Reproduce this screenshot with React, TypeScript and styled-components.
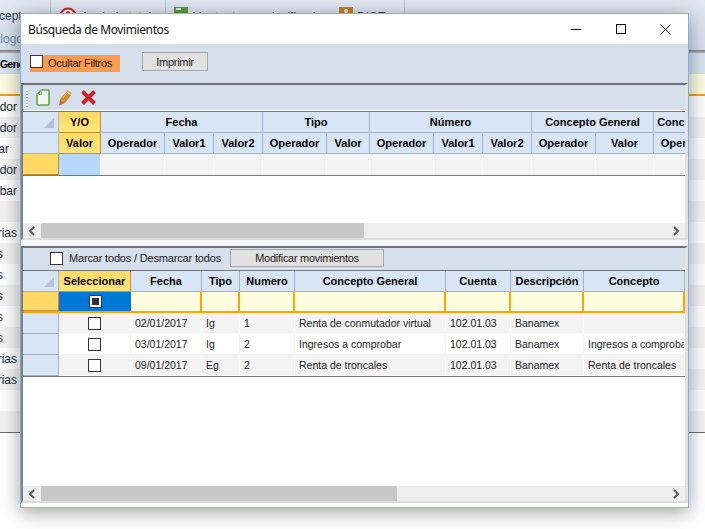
import React from 'react';
import styled, { createGlobalStyle } from 'styled-components';

const GlobalStyle = createGlobalStyle`
  html, body {
    margin: 0;
    padding: 0;
    width: 705px;
    height: 529px;
    overflow: hidden;
    background: #fff;
    font-family: 'Liberation Sans', Arial, sans-serif;
    font-size: 11px;
    color: #222;
  }
  * { box-sizing: border-box; }
`;

const Page = styled.div`
  position: relative;
  width: 705px;
  height: 529px;
  overflow: hidden;
`;

/* ---- application behind the dialog ---- */

const Ribbon = styled.div`
  display: flex;
  height: 50px;
  background: linear-gradient(#e0e7f1, #d3dfed);
`;

const RibbonGroup = styled.div<{ $w: number }>`
  flex: 0 0 ${(p) => p.$w}px;
  display: flex;
  flex-direction: column;
  gap: 9px;
  padding: 9px 0 0 8px;
  border-right: 1px solid #b4bfcd;
  overflow: hidden;
  font-size: 12px;
  color: #33445c;
  white-space: nowrap;
`;

const RibbonEdgeText = styled.span<{ $shift: number; $light?: boolean }>`
  margin-left: ${(p) => p.$shift}px;
  color: ${(p) => (p.$light ? '#6f8aa8' : '#33445c')};
`;

const RibbonItem = styled.div`
  display: flex;
  align-items: flex-start;
  gap: 4px;
  margin-top: -2px;
`;

const RibbonLabel = styled.span<{ $w?: number }>`
  margin-top: 3px;
  ${(p) => (p.$w ? `flex: 0 0 ${p.$w}px;` : '')}
`;

const BackHeaderRule = styled.div`
  height: 3px;
  background: linear-gradient(#7f7f7f, #9a9a9a 50%, #b9b9b9);
`;

const BackHeader = styled.div`
  height: 21px;
  padding-top: 5px;
  background: #d5e2f0;
  font-weight: bold;
  font-size: 10.5px;
  letter-spacing: -0.6px;
  color: #000;
  white-space: nowrap;
`;

const BackFilter = styled.div`
  height: 22px;
  background: #fcfbe0;
  border-bottom: 2px solid #efa00f;
`;

const BackRow = styled.div<{ $alt: boolean }>`
  height: 21px;
  display: flex;
  align-items: center;
  background: ${(p) => (p.$alt ? '#f2f2f2' : '#fdfdfd')};
`;

const BackCell = styled.div<{ $inset: number }>`
  width: 17px;
  display: flex;
  justify-content: flex-end;
  padding-right: ${(p) => p.$inset}px;
  overflow: hidden;
  white-space: nowrap;
  font-size: 12px;
  color: #1c2a3a;
`;

const BackBottom = styled.div`
  border-top: 1px solid #6e6e6e;
`;

/* ---- dialog ---- */

const Dialog = styled.div`
  position: absolute;
  left: 20px;
  top: 13px;
  width: 669px;
  height: 495px;
  display: flex;
  flex-direction: column;
  background: #fff;
  border: 1px solid #7cb4ea;
  box-shadow: 0 4px 18px rgba(0, 0, 0, 0.38);
`;

const TitleBar = styled.div`
  flex: 0 0 30px;
  display: flex;
  align-items: center;
  padding-left: 7px;
  background: #fff;
`;

const TitleText = styled.span`
  flex: 1;
  font-family: 'Noto Sans', 'Liberation Sans', sans-serif;
  font-size: 12px;
  letter-spacing: -0.4px;
  color: #111;
`;

const TitleButton = styled.div`
  flex: 0 0 45px;
  display: flex;
  justify-content: center;
  align-items: center;
`;

const FilterBar = styled.div`
  flex: 0 0 39px;
  display: flex;
  align-items: flex-start;
  gap: 22px;
  padding: 8px 0 0 9px;
  background: #d6e0ec;
`;

const OrangeCheck = styled.label`
  margin-top: 3px;
  width: 90px;
  height: 17px;
  display: flex;
  align-items: flex-start;
  gap: 5px;
  background: #f79c50;
  color: #222;
  line-height: 16px;
  letter-spacing: -0.3px;
`;

const CheckBox = styled.span<{ $mark?: boolean }>`
  flex: 0 0 13px;
  width: 13px;
  height: 13px;
  display: flex;
  justify-content: center;
  align-items: center;
  background: #fff;
  border: 1px solid #333;

  &::after {
    content: '';
    display: ${(p) => (p.$mark ? 'block' : 'none')};
    width: 7px;
    height: 7px;
    background: #333;
  }
`;

const PlainButton = styled.button<{ $w: number; $h: number }>`
  width: ${(p) => p.$w}px;
  height: ${(p) => p.$h}px;
  padding: 0;
  background: #e1e1e1;
  border: 1px solid #a8a8a8;
  font-family: inherit;
  font-size: 11px;
  letter-spacing: -0.28px;
  color: #222;
`;

const Pane = styled.div<{ $grow?: boolean }>`
  ${(p) => (p.$grow ? 'flex: 1; margin-bottom: 4px;' : 'flex: 0 0 157px;')}
  display: flex;
  flex-direction: column;
  min-height: 0;
  overflow: hidden;
  background: #fff;
  border-top: 2px solid #6f6f6f;
  border-left: 2px solid #7f7f7f;
  border-right: 3px solid #e2e2e2;
  border-bottom: 2px solid #dcdcdc;
`;

const Splitter = styled.div`
  flex: 0 0 6px;
  background: #f4f6fa;
`;

const Toolbar = styled.div`
  flex: 0 0 26px;
  display: flex;
  align-items: center;
  gap: 8px;
  padding-left: 3px;
  background: #d6e0ec;
  border-bottom: 1px solid #fff;
`;

const Grip = styled.span`
  width: 2px;
  height: 18px;
  background: repeating-linear-gradient(#f7f9fc 0 2px, #9aa7b6 2px 3px);
`;

const MarkBar = styled.div`
  flex: 0 0 22px;
  display: flex;
  align-items: center;
  padding: 0 0 2px 27px;
  background: #d6e0ec;
`;

const MarkLabel = styled.label`
  width: 180px;
  display: flex;
  align-items: center;
  gap: 6px;
  letter-spacing: -0.17px;
  color: #222;
`;

const Grid = styled.div`
  flex: 0 0 auto;
  border-top: 1px solid #777;
  border-bottom: 1px solid #777;
`;

const Row = styled.div<{ $h?: number }>`
  display: flex;
  height: ${(p) => p.$h ?? 21}px;
`;

const HeadCell = styled.div<{ $w: number; $gold?: boolean }>`
  flex: 0 0 ${(p) => p.$w}px;
  display: flex;
  align-items: center;
  justify-content: center;
  overflow: hidden;
  white-space: nowrap;
  font-weight: bold;
  font-size: 11px;
  color: #000;
  background: ${(p) => (p.$gold ? 'linear-gradient(#ffd965, #ffe57a)' : '#d8e5f4')};
  border-right: 1px solid ${(p) => (p.$gold ? '#c39235' : '#a3b3cc')};
  border-bottom: 1px solid ${(p) => (p.$gold ? '#c39235' : '#a3b3cc')};
`;

const CornerCell = styled.div<{ $blank?: boolean }>`
  position: relative;
  flex: 0 0 36px;
  background: #d8e5f4;
  border-right: 1px solid #a3b3cc;
  border-bottom: 1px solid #a3b3cc;

  &::after {
    content: '';
    display: ${(p) => (p.$blank ? 'none' : 'block')};
    position: absolute;
    right: 4px;
    bottom: 4px;
    border-style: solid;
    border-width: 0 0 10px 10px;
    border-color: transparent transparent #b3c2d6 transparent;
  }
`;

const RowHead = styled.div<{ $gold?: boolean }>`
  flex: 0 0 36px;
  background: ${(p) => (p.$gold ? '#ffd966' : '#d8e5f4')};
  border-right: ${(p) => (p.$gold ? '1px solid #c39235' : '1px solid #a3b3cc')};
  border-bottom: 1px solid ${(p) => (p.$gold ? '#c39235' : '#a3b3cc')};
`;

const BlankCell = styled.div<{ $w: number; $sel?: boolean }>`
  flex: 0 0 ${(p) => p.$w}px;
  background: ${(p) => (p.$sel ? '#b8d8fb' : '#f3f3f3')};
  border-right: 1px solid #f8f8f8;
`;

const FilterRow = styled.div`
  display: flex;
  height: 21px;
  border-bottom: 2px solid #ffa500;
`;

const FilterCell = styled.div<{ $w: number }>`
  flex: 0 0 ${(p) => p.$w}px;
  background: #fffde0;
  border-right: 2px solid #ffa500;
`;

const SelectedCell = styled.div<{ $w: number }>`
  flex: 0 0 ${(p) => p.$w}px;
  display: flex;
  justify-content: center;
  align-items: center;
  background: #0078d7;
`;

const DataCell = styled.div<{ $w: number; $alt: boolean; $center?: boolean }>`
  flex: 0 0 ${(p) => p.$w}px;
  display: flex;
  align-items: center;
  justify-content: ${(p) => (p.$center ? 'center' : 'flex-start')};
  padding-left: ${(p) => (p.$center ? 0 : 4)}px;
  overflow: hidden;
  white-space: nowrap;
  font-size: 10.5px;
  color: #222;
  background: ${(p) => (p.$alt ? '#f3f3f3' : '#fff')};
  border-right: 1px solid ${(p) => (p.$alt ? '#fafafa' : '#f3f3f3')};
  border-bottom: 1px solid ${(p) => (p.$alt ? '#fafafa' : '#f3f3f3')};
`;

const Filler = styled.div`
  flex: 1;
  background: #fff;
`;

const ScrollBar = styled.div`
  flex: 0 0 15px;
  display: flex;
  align-items: center;
  background: #eeeeee;
`;

const ScrollArrow = styled.div<{ $right?: boolean }>`
  flex: 0 0 18px;
  display: flex;
  justify-content: center;
  ${(p) => (p.$right ? 'margin-left: auto;' : '')}
`;

const ScrollThumb = styled.div<{ $w: number }>`
  flex: 0 0 ${(p) => p.$w}px;
  height: 15px;
  background: #c8c8c8;
`;

/* ---- drawings ---- */

const Chevron = ({ right }: { right?: boolean }) => (
  <svg width="8" height="10" viewBox="0 0 8 10">
    <path d={right ? 'M2 1l4 4-4 4' : 'M6 1L2 5l4 4'} fill="none" stroke="#5f5f5f" strokeWidth="2" />
  </svg>
);

const NewDocIcon = () => (
  <svg width="14" height="17" viewBox="0 0 14 17">
    <path d="M5.500 1H12q1 0 1 1v13q0 1-1 1H2q-1 0-1-1V5.500z" fill="#f4f9f0" stroke="#62a54c" strokeWidth="1.6" />
    <path d="M5.500 1v4.500H1" fill="none" stroke="#8fc07c" strokeWidth="1" />
  </svg>
);

const PencilIcon = () => (
  <svg width="14" height="17" viewBox="0 0 14 17">
    <path d="M8 3l5 3.500-6 7.500-5-3.500z" fill="#d48c30" />
    <path d="M9.500 1l4.500 3-1 1.500-5-3.500z" fill="#e4a650" />
    <path d="M2 10.500l5 3.500-6 2.500z" fill="#b8772a" />
    <path d="M5 9l3.500-5" stroke="#f0c88e" strokeWidth="1" />
  </svg>
);

const DeleteIcon = () => (
  <svg width="17" height="17" viewBox="0 0 17 17">
    <path d="M2.500 2.500l12 12M14.500 2.500l-12 12" stroke="#c5282b" strokeWidth="4" />
  </svg>
);

const MinimizeIcon = () => (
  <svg width="10" height="10" viewBox="0 0 10 10">
    <path d="M0 5.500h10" stroke="#111" strokeWidth="1" />
  </svg>
);

const MaximizeIcon = () => (
  <svg width="10" height="10" viewBox="0 0 10 10">
    <rect x="0.5" y="0.5" width="9" height="9" fill="none" stroke="#111" strokeWidth="1" />
  </svg>
);

const CloseIcon = () => (
  <svg width="11" height="11" viewBox="0 0 11 11">
    <path d="M0.500 0.500l10 10M10.500 0.500l-10 10" stroke="#111" strokeWidth="1" />
  </svg>
);

const StopIcon = () => (
  <svg width="18" height="18" viewBox="0 0 18 18">
    <circle cx="9" cy="9" r="7.500" fill="#fff" stroke="#c5282b" strokeWidth="2" />
    <circle cx="9" cy="6" r="2" fill="#c5282b" />
  </svg>
);

const GreenSheetIcon = () => (
  <svg width="14" height="14" viewBox="0 0 14 14">
    <rect width="14" height="14" fill="#5b9a45" />
    <rect x="2" y="1" width="5" height="2" fill="#dcebd4" />
  </svg>
);

const OrangeBoxIcon = () => (
  <svg width="14" height="14" viewBox="0 0 14 14">
    <rect width="14" height="14" fill="#c57f2a" />
    <circle cx="7" cy="4" r="2" fill="#f2e2cc" />
  </svg>
);

/* ---- data ---- */

const backRows = [
  { text: 'Operador', inset: 0 },
  { text: 'Operador', inset: 0 },
  { text: 'Comprobar', inset: 8 },
  { text: 'Operador', inset: 0 },
  { text: 'Comprobar', inset: 0 },
  { text: '', inset: 0 },
  { text: 'Varias', inset: 0 },
  { text: 'Otros', inset: 14 },
  { text: 'Otros', inset: 14 },
  { text: 'Otros', inset: 14 },
  { text: 'Otros', inset: 14 },
  { text: 'Otros', inset: 14 },
  { text: 'Varias', inset: 0 },
  { text: 'Varias', inset: 0 },
  { text: '', inset: 0 },
  { text: '', inset: 0 },
];

const topGroups = [
  { label: 'Fecha', w: 162 },
  { label: 'Tipo', w: 107 },
  { label: 'Número', w: 162 },
  { label: 'Concepto General', w: 122 },
  { label: 'Concepto', w: 58 },
];

const topColumns = [
  { label: 'Operador', w: 64 },
  { label: 'Valor1', w: 49 },
  { label: 'Valor2', w: 49 },
  { label: 'Operador', w: 64 },
  { label: 'Valor', w: 43 },
  { label: 'Operador', w: 64 },
  { label: 'Valor1', w: 49 },
  { label: 'Valor2', w: 49 },
  { label: 'Operador', w: 64 },
  { label: 'Valor', w: 58 },
  { label: 'Operador', w: 64 },
];

const listColumns = [
  { label: 'Fecha', w: 71 },
  { label: 'Tipo', w: 38 },
  { label: 'Numero', w: 55 },
  { label: 'Concepto General', w: 151 },
  { label: 'Cuenta', w: 65 },
  { label: 'Descripción', w: 73 },
  { label: 'Concepto', w: 101 },
];

const movimientos = [
  ['02/01/2017', 'Ig', '1', 'Renta de conmutador virtual', '102.01.03', 'Banamex', ''],
  ['03/01/2017', 'Ig', '2', 'Ingresos a comprobar', '102.01.03', 'Banamex', 'Ingresos a comprobar'],
  ['09/01/2017', 'Eg', '2', 'Renta de troncales', '102.01.03', 'Banamex', 'Renta de troncales'],
];

export default function App() {
  return (
    <Page>
      <GlobalStyle />

      <Ribbon>
        <RibbonGroup $w={51}>
          <RibbonEdgeText $shift={-31}>Concepto</RibbonEdgeText>
          <RibbonEdgeText $shift={-33} $light>Catálogos</RibbonEdgeText>
        </RibbonGroup>
        <RibbonGroup $w={115}>
          <RibbonItem><StopIcon /><RibbonLabel>Anulado total</RibbonLabel></RibbonItem>
        </RibbonGroup>
        <RibbonGroup $w={239}>
          <RibbonItem>
            <GreenSheetIcon />
            <RibbonLabel $w={143}>Montante por clasificado</RibbonLabel>
            <OrangeBoxIcon />
            <RibbonLabel>DIOT</RibbonLabel>
          </RibbonItem>
        </RibbonGroup>
      </Ribbon>
      <BackHeaderRule />
      <BackHeader>General</BackHeader>
      <BackFilter />
      {backRows.map((row, i) => (
        <BackRow key={i} $alt={i % 2 === 1}>
          <BackCell $inset={row.inset}>{row.text}</BackCell>
        </BackRow>
      ))}
      <BackBottom />

      <Dialog>
        <TitleBar>
          <TitleText>Búsqueda de Movimientos</TitleText>
          <TitleButton><MinimizeIcon /></TitleButton>
          <TitleButton><MaximizeIcon /></TitleButton>
          <TitleButton><CloseIcon /></TitleButton>
        </TitleBar>

        <FilterBar>
          <OrangeCheck><CheckBox />Ocultar Filtros</OrangeCheck>
          <PlainButton $w={66} $h={19}>Imprimir</PlainButton>
        </FilterBar>

        <Pane>
          <Toolbar>
            <Grip />
            <NewDocIcon />
            <PencilIcon />
            <DeleteIcon />
          </Toolbar>
          <Grid>
            <Row>
              <CornerCell />
              <HeadCell $w={42} $gold>Y/O</HeadCell>
              {topGroups.map((g) => (
                <HeadCell key={g.label} $w={g.w}>{g.label}</HeadCell>
              ))}
            </Row>
            <Row>
              <CornerCell $blank />
              <HeadCell $w={42} $gold>Valor</HeadCell>
              {topColumns.map((c, i) => (
                <HeadCell key={i} $w={c.w}>{c.label}</HeadCell>
              ))}
            </Row>
            <Row>
              <RowHead $gold />
              <BlankCell $w={42} $sel />
              {topColumns.map((c, i) => (
                <BlankCell key={i} $w={c.w} />
              ))}
            </Row>
          </Grid>
          <Filler />
          <ScrollBar>
            <ScrollArrow><Chevron /></ScrollArrow>
            <ScrollThumb $w={323} />
            <ScrollArrow $right><Chevron right /></ScrollArrow>
          </ScrollBar>
        </Pane>

        <Splitter />

        <Pane $grow>
          <MarkBar>
            <MarkLabel><CheckBox />Marcar todos / Desmarcar todos</MarkLabel>
            <PlainButton $w={154} $h={18}>Modificar movimientos</PlainButton>
          </MarkBar>
          <Grid>
            <Row>
              <CornerCell />
              <HeadCell $w={72} $gold>Seleccionar</HeadCell>
              {listColumns.map((c) => (
                <HeadCell key={c.label} $w={c.w}>{c.label}</HeadCell>
              ))}
            </Row>
            <FilterRow>
              <RowHead $gold />
              <SelectedCell $w={72}><CheckBox $mark /></SelectedCell>
              {listColumns.map((c) => (
                <FilterCell key={c.label} $w={c.w} />
              ))}
            </FilterRow>
            {movimientos.map((mov, r) => (
              <Row key={r}>
                <RowHead />
                <DataCell $w={72} $alt={r % 2 === 0} $center><CheckBox /></DataCell>
                {mov.map((text, c) => (
                  <DataCell key={c} $w={listColumns[c].w} $alt={r % 2 === 0}>{text}</DataCell>
                ))}
              </Row>
            ))}
          </Grid>
          <Filler />
          <ScrollBar>
            <ScrollArrow><Chevron /></ScrollArrow>
            <ScrollThumb $w={356} />
            <ScrollArrow $right><Chevron right /></ScrollArrow>
          </ScrollBar>
        </Pane>
      </Dialog>
    </Page>
  );
}
